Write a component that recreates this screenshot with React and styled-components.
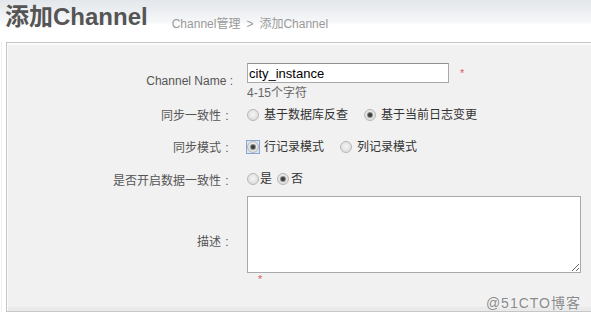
import styled, { createGlobalStyle } from 'styled-components';

const Global = createGlobalStyle`
    html, body {
        margin: 0;
        padding: 0;
        background: #fff;
    }
    body {
        font-family: "Liberation Sans", "Noto Sans CJK SC", sans-serif;
        font-size: 12px;
        color: #333;
    }
`;

const Page = styled.div`
    width: 591px;
    height: 321px;
    overflow: hidden;
    position: relative;
`;

const Header = styled.div`
    height: 42px;
    display: flex;
    align-items: flex-start;
    background: linear-gradient(to bottom, #e3e7eb 0px, #f6f7f8 22px, #fff 25px, #fff 100%);
`;

const Title = styled.h1`
    margin: 0;
    padding: 1px 0 0 5px;
    font-size: 24px;
    line-height: 32px;
    font-weight: bold;
    color: #555;
    font-family: "Liberation Sans", "Noto Sans CJK SC", sans-serif;
`;

const Crumbs = styled.div`
    margin: 15px 0 0 24px;
    font-size: 12px;
    line-height: 18px;
    color: #999;
    span {
        margin: 0 6px;
    }
`;

const Outer = styled.div`
    padding-left: 2px;
    border-left: 1px solid #eee;
    margin-left: 1px;
    height: 270px;
`;

const Panel = styled.div`
    box-sizing: border-box;
    margin-left: 2px;
    width: 620px;
    height: 270px;
    background: #f1f1f1;
    border: 1px solid #c6c6c6;
    border-right: none;
    box-shadow: inset 1px 2px 0 #fafafa, inset 0 -4px 0 #eaeaea;
    padding-top: 20px;
`;

const Row = styled.div`
    display: flex;
    align-items: center;
    min-height: ${p => p.h || 30}px;
`;

const Label = styled.div`
    width: 226px;
    text-align: right;
    color: #555;
    white-space: nowrap;
`;

const Colon = styled.span`
    display: inline-block;
    width: 12px;
    text-align: center;
`;

const Control = styled.div`
    margin-left: 14px;
    display: flex;
    flex-direction: ${p => (p.column ? 'column' : 'row')};
    align-items: ${p => (p.column ? 'flex-start' : 'center')};
`;

const InputLine = styled.div`
    display: flex;
    align-items: center;
`;

const TextInput = styled.input`
    width: 202px;
    height: 20px;
    box-sizing: border-box;
    border: 1px solid #a9a9a9;
    border-top-color: #8f8f8f;
    padding: 0 1px;
    font-family: "Liberation Sans", sans-serif;
    font-size: 13px;
    color: #000;
    outline: none;
`;

const Star = styled.span`
    color: #e05a5a;
    font-size: 11px;
    margin-left: ${p => p.left || 11}px;
    line-height: 12px;
`;

const Hint = styled.div`
    color: #666;
    margin-top: 4px;
    line-height: 12px;
`;

const Option = styled.label`
    display: flex;
    align-items: center;
    margin-right: ${p => p.gap ?? 16}px;
    color: #333;
    line-height: 16px;
`;

const FocusBox = styled.span`
    display: flex;
    align-items: center;
    justify-content: center;
    width: 14px;
    height: 14px;
    box-sizing: border-box;
    border: 1px solid #86a6d4;
    background: #dfe9f6;
    margin: 0 4px 0 -1px;
`;

const RadioMark = styled.span`
    position: relative;
    flex: none;
    width: 12px;
    height: 12px;
    box-sizing: border-box;
    border-radius: 50%;
    border: 1px solid #b8b8b8;
    background: radial-gradient(circle at 50% 45%, #f6f6f6 0%, #e4e4e4 55%, #cfcfcf 100%);
    margin-right: ${p => p.space ?? 5}px;
    &::after {
        content: '';
        display: ${p => (p.checked ? 'block' : 'none')};
        position: absolute;
        left: 3px;
        top: 3px;
        width: 4px;
        height: 4px;
        border-radius: 50%;
        background: #3c3c3c;
        box-shadow: 0 0 0 1px #8a8a8a;
    }
`;

const Radio = ({ checked, focus, space, gap, children }) => (
    <Option gap={gap}>
        {focus ? (
            <FocusBox>
                <RadioMark checked={checked} space={0} />
            </FocusBox>
        ) : (
            <RadioMark checked={checked} space={space} />
        )}
        {children}
    </Option>
);

const TextArea = styled.textarea`
    width: 334px;
    height: 77px;
    box-sizing: border-box;
    border: 1px solid #a9a9a9;
    margin: 0;
    display: block;
    outline: none;
`;

const Watermark = styled.div`
    position: absolute;
    right: 10px;
    bottom: 9px;
    font-size: 14px;
    color: #8a8a8a;
    letter-spacing: 1px;
    text-shadow: 0 0 1px #fff;
`;

const App = () => (
    <Page>
        <Global />
        <Header>
            <Title>添加Channel</Title>
            <Crumbs>
                Channel管理<span>&gt;</span>添加Channel
            </Crumbs>
        </Header>
        <Outer>
            <Panel>
                <Row h={36}>
                    <Label>Channel Name :</Label>
                    <Control column>
                        <InputLine>
                            <TextInput defaultValue="city_instance" />
                            <Star>*</Star>
                        </InputLine>
                        <Hint>4-15个字符</Hint>
                    </Control>
                </Row>
                <Row h={31}>
                    <Label>同步一致性<Colon>:</Colon></Label>
                    <Control>
                        <Radio>基于数据库反查</Radio>
                        <Radio checked>基于当前日志变更</Radio>
                    </Control>
                </Row>
                <Row h={33}>
                    <Label>同步模式<Colon>:</Colon></Label>
                    <Control>
                        <Radio checked focus>行记录模式</Radio>
                        <Radio>列记录模式</Radio>
                    </Control>
                </Row>
                <Row h={32}>
                    <Label>是否开启数据一致性<Colon>:</Colon></Label>
                    <Control>
                        <Radio space={1} gap={5}>是</Radio>
                        <Radio checked space={2}>否</Radio>
                    </Control>
                </Row>
                <Row h={90}>
                    <Label>描述<Colon>:</Colon></Label>
                    <Control column>
                        <TextArea />
                        <Star left={11}>*</Star>
                    </Control>
                </Row>
            </Panel>
        </Outer>
        <Watermark>@51CTO博客</Watermark>
    </Page>
);

export default App;
